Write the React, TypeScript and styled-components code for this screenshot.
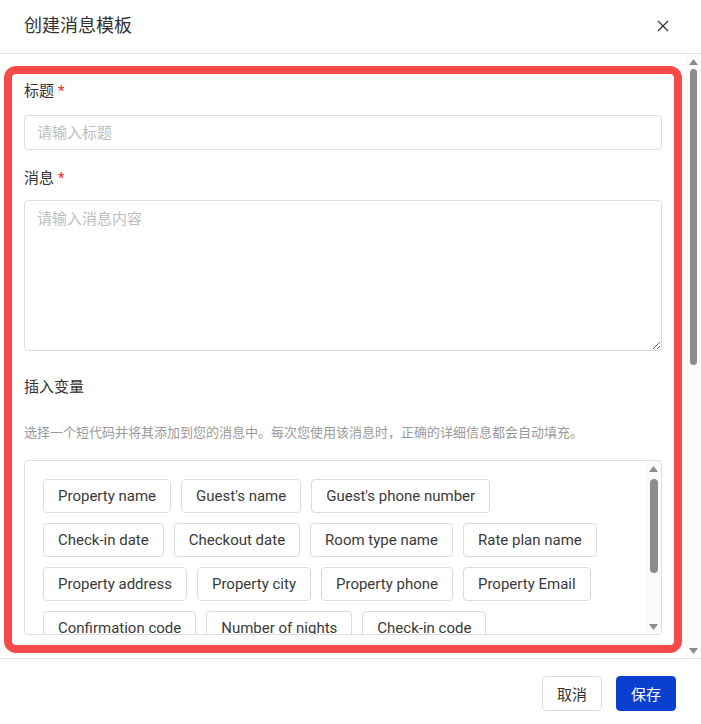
import React from "react";
import styled, { createGlobalStyle } from "styled-components";

const GlobalStyle = createGlobalStyle`
  html, body { margin: 0; padding: 0; background: #fff; }
  body { font-family: Roboto, "Noto Sans CJK SC", sans-serif; color: #333; }
  * { box-sizing: border-box; }
`;

const Dialog = styled.div`
  width: 100%;
  height: 724px;
  display: flex;
  flex-direction: column;
  background: #fff;
`;

const Header = styled.div`
  height: 54px;
  flex: none;
  display: flex;
  align-items: center;
  justify-content: space-between;
  padding: 0 30px 2px 24px;
  border-bottom: 1px solid #e3e3e3;
`;

const Title = styled.h2`
  margin: 0;
  font-size: 18px;
  font-weight: 400;
  color: #333;
  line-height: 24px;
`;

const CloseButton = styled.button`
  border: none;
  background: none;
  padding: 0;
  width: 16px;
  height: 16px;
  display: flex;
  align-items: center;
  justify-content: center;
  color: #333;
  cursor: pointer;
`;

const Body = styled.div`
  flex: 1;
  min-height: 0;
  display: flex;
`;

const Viewport = styled.div`
  flex: 1;
  min-width: 0;
  overflow: hidden;
`;

/* Drawn scrollbar */
const Rail = styled.div`
  flex: none;
  width: 15px;
  display: flex;
  flex-direction: column;
  align-items: center;
  padding: 5px 0 4px;
  background: #fbfbfb;
`;

const Thumb = styled.div<{ $top: number; $height: number; $width: number }>`
  margin-top: ${(p) => p.$top}px;
  height: ${(p) => p.$height}px;
  width: ${(p) => p.$width}px;
  border-radius: ${(p) => p.$width / 2}px;
  background: #8c8c8c;
`;

const RailSpacer = styled.div`
  flex: 1;
`;

const Arrow = ({ down }: { down?: boolean }) => (
  <svg width="9" height="6" viewBox="0 0 9 6" style={{ flex: "none", display: "block" }}>
    <polygon points={down ? "0,0 9,0 4.5,6" : "4.5,0 9,6 0,6"} fill="#8a8a8a" />
  </svg>
);

const ScrollRail = ({ top, height, width }: { top: number; height: number; width: number }) => (
  <Rail>
    <Arrow />
    <Thumb $top={top} $height={height} $width={width} />
    <RailSpacer />
    <Arrow down />
  </Rail>
);

const Highlight = styled.form`
  margin: 12px 4px 4px 4px;
  border: 8px solid #f74b4a;
  border-radius: 12px;
  padding: 6px 12px 10px;
  display: flex;
  flex-direction: column;
`;

const Label = styled.label<{ $gap?: number }>`
  display: block;
  font-size: 15px;
  line-height: 22px;
  color: #333;
  margin-top: ${(p) => p.$gap ?? 0}px;
`;

const Required = styled.span`
  color: #f5222d;
  margin-left: 4px;
`;

const TextInput = styled.input`
  margin-top: 13px;
  width: 100%;
  height: 35px;
  border: 1px solid #dedede;
  border-radius: 4px;
  padding: 0 12px;
  font: inherit;
  font-size: 15px;
  color: #333;
  outline: none;
  &::placeholder { color: #bdbdbd; }
`;

const TextArea = styled.textarea`
  margin-top: 11px;
  width: 100%;
  height: 151px;
  border: 1px solid #dedede;
  border-radius: 4px;
  padding: 7px 12px;
  font: inherit;
  font-size: 15px;
  line-height: 22px;
  color: #333;
  outline: none;
  display: block;
  resize: vertical;
  &::placeholder { color: #bdbdbd; }
`;

const Description = styled.p`
  margin: 25px 0 0;
  font-size: 13px;
  line-height: 20px;
  color: #9a9a9a;
`;

const TagBox = styled.div`
  margin-top: 17px;
  height: 175px;
  border: 1px solid #dedede;
  border-radius: 4px;
  display: flex;
  overflow: hidden;
`;

const TagViewport = styled.div`
  flex: 1;
  min-width: 0;
  overflow: hidden;
  padding: 18px 30px 0 18px;
`;

const TagList = styled.div`
  display: flex;
  flex-wrap: wrap;
  gap: 10px 10px;
`;

const Tag = styled.button`
  height: 34px;
  padding: 0 14px;
  border: 1px solid #dcdcdc;
  border-radius: 4px;
  background: #fff;
  font-family: Roboto, "Noto Sans CJK SC", sans-serif;
  font-size: 15px;
  color: #3a3a3a;
  cursor: pointer;
  white-space: nowrap;
`;

const Footer = styled.div`
  flex: none;
  border-top: 1px solid #e3e3e3;
  display: flex;
  justify-content: flex-end;
  gap: 14px;
  padding: 17px 25px 13px;
`;

const Button = styled.button<{ $primary?: boolean }>`
  height: 35px;
  padding: 0 14px;
  border-radius: 4px;
  border: 1px solid ${(p) => (p.$primary ? "#0a40cf" : "#dcdcdc")};
  background: ${(p) => (p.$primary ? "#0a40cf" : "#fff")};
  color: ${(p) => (p.$primary ? "#fff" : "#333")};
  font-family: Roboto, "Noto Sans CJK SC", sans-serif;
  font-size: 15px;
  cursor: pointer;
`;

const variables = [
  "Property name",
  "Guest's name",
  "Guest's phone number",
  "Check-in date",
  "Checkout date",
  "Room type name",
  "Rate plan name",
  "Property address",
  "Property city",
  "Property phone",
  "Property Email",
  "Confirmation code",
  "Number of nights",
  "Check-in code",
  "Number of guests",
  "Check-in time",
  "Checkout time",
  "Total price",
  "Balance due",
  "Booking source",
];

export default function App() {
  return (
    <>
      <GlobalStyle />
      <Dialog>
        <Header>
          <Title>创建消息模板</Title>
          <CloseButton aria-label="关闭">
            <svg width="12" height="12" viewBox="0 0 12 12">
              <path d="M1 1L11 11M11 1L1 11" stroke="#333" strokeWidth="1.3" fill="none" />
            </svg>
          </CloseButton>
        </Header>
        <Body>
          <Viewport>
            <Highlight>
              <Label>
                标题<Required>*</Required>
              </Label>
              <TextInput placeholder="请输入标题" />
              <Label $gap={17}>
                消息<Required>*</Required>
              </Label>
              <TextArea placeholder="请输入消息内容" />
              <Label $gap={25}>插入变量</Label>
              <Description>
                选择一个短代码并将其添加到您的消息中。每次您使用该消息时，正确的详细信息都会自动填充。
              </Description>
              <TagBox>
                <TagViewport>
                  <TagList>
                    {variables.map((v) => (
                      <Tag type="button" key={v}>
                        {v}
                      </Tag>
                    ))}
                  </TagList>
                </TagViewport>
                <ScrollRail top={7} height={94} width={8} />
              </TagBox>
            </Highlight>
          </Viewport>
          <ScrollRail top={4} height={296} width={7} />
        </Body>
        <Footer>
          <Button>取消</Button>
          <Button $primary>保存</Button>
        </Footer>
      </Dialog>
    </>
  );
}
